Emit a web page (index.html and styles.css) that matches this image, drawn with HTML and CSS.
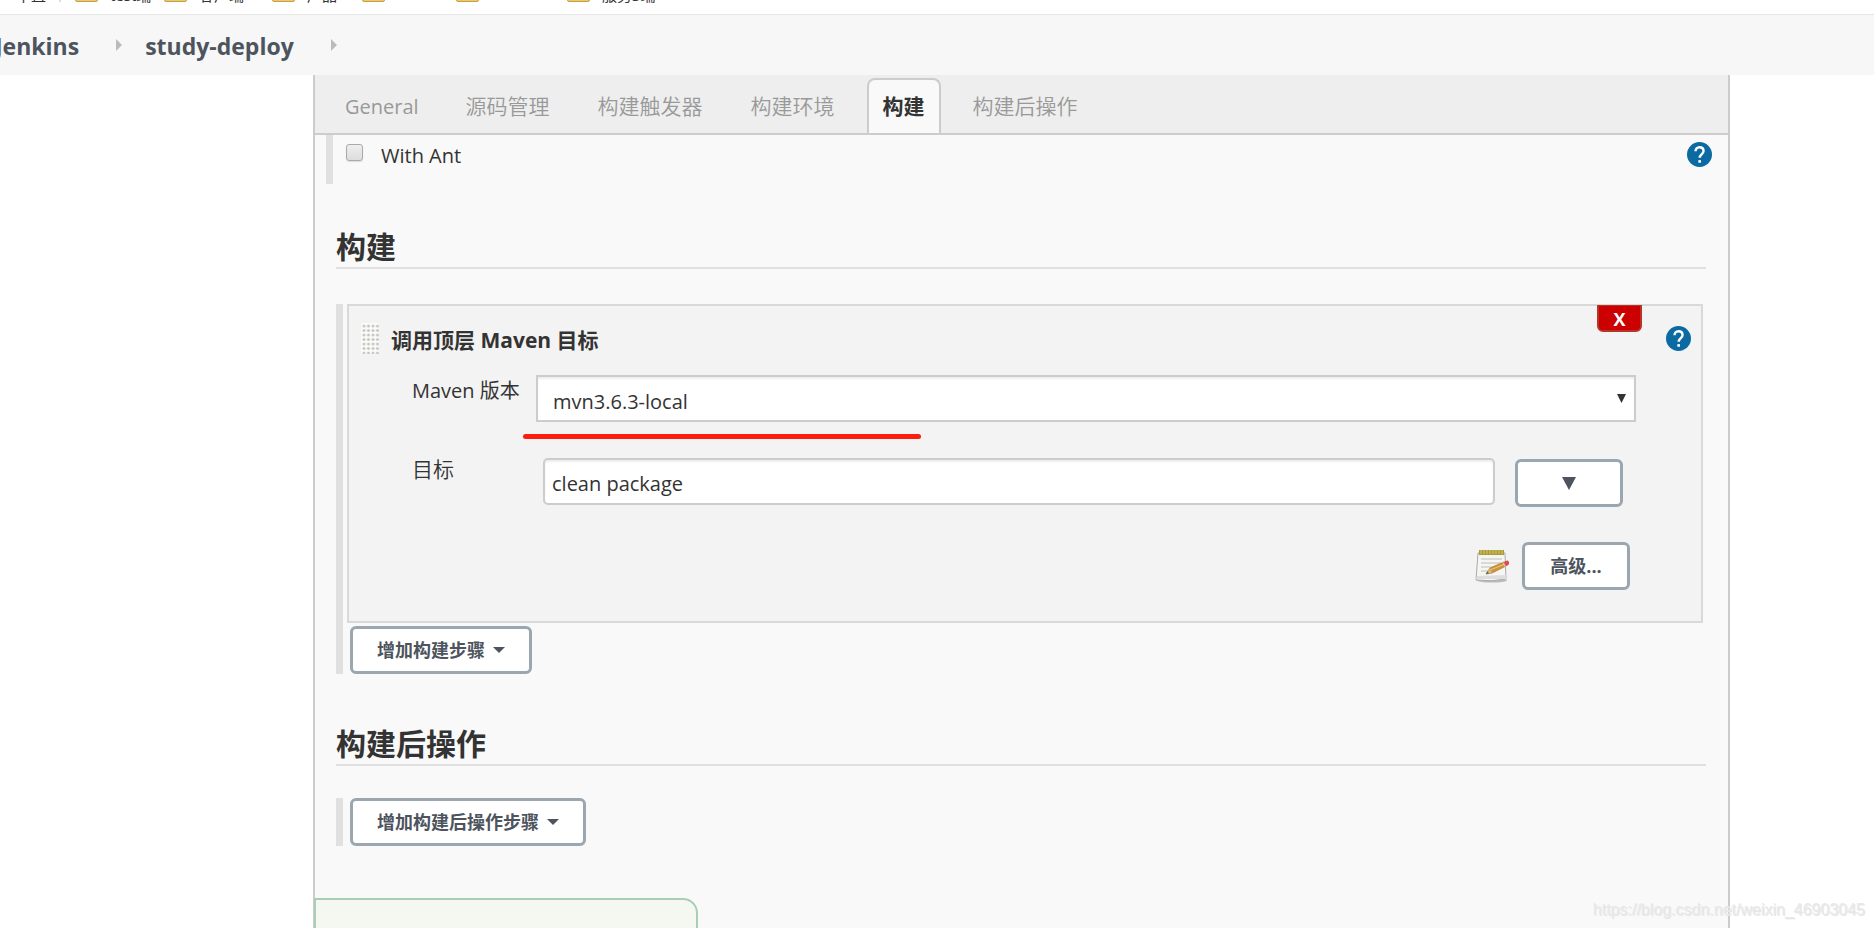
FILE: index.html
```html
<!DOCTYPE html>
<html lang="zh-CN">
<head>
<meta charset="utf-8">
<title>study-deploy Config [Jenkins]</title>
<link rel="stylesheet" href="styles.css">
</head>
<body>
<svg class="defs" aria-hidden="true">
  <symbol id="help" viewBox="0 0 24 24">
    <circle cx="12" cy="12" r="12" fill="#0b6aa2"/>
    <path d="M8.2 8.9C8.2 6.7 9.7 5 12 5s3.900 1.500 3.900 3.600c0 2.900-3.700 3.200-3.700 6.600" fill="none" stroke="#fff" stroke-width="2.300"/>
    <rect x="10.900" y="17.400" width="2.500" height="2.500" fill="#fff"/>
  </symbol>
</svg>

<div class="bookmarks">
  <span class="mark-label first">中直</span>
  <span class="mark-divider"></span>
  <span class="mark w-89"><i class="folder"></i><span class="mark-label">test端</span></span>
  <span class="mark w-108"><i class="folder"></i><span class="mark-label">客户端</span></span>
  <span class="mark w-90"><i class="folder"></i><span class="mark-label">产品</span></span>
  <span class="mark w-94"><i class="folder"></i></span>
  <span class="mark w-111"><i class="folder"></i></span>
  <span class="mark w-111"><i class="folder"></i><span class="mark-label">服务3端</span></span>
</div>

<nav class="breadcrumbs">
  <a href="#">Jenkins</a>
  <svg class="crumb-arrow" viewBox="0 0 6 12"><path d="M0 0L6 6L0 12Z" fill="#bbb"/></svg>
  <a href="#">study-deploy</a>
  <svg class="crumb-arrow" viewBox="0 0 6 12"><path d="M0 0L6 6L0 12Z" fill="#bbb"/></svg>
</nav>

<main class="panel">
  <nav class="tabs">
    <a class="tab latin" href="#">General</a>
    <a class="tab" href="#">源码管理</a>
    <a class="tab" href="#">构建触发器</a>
    <a class="tab" href="#">构建环境</a>
    <a class="tab active" href="#build">构建</a>
    <a class="tab" href="#post">构建后操作</a>
  </nav>

  <div class="option">
    <input type="checkbox" id="ant">
    <label for="ant">With Ant</label>
    <svg class="help"><use href="#help"/></svg>
  </div>

  <section class="section" id="build">
    <h2>构建</h2>
    <div class="steps">
      <div class="builder">
        <button class="delete" type="button">X</button>
        <div class="builder-head">
          <svg class="grip" viewBox="0 0 18 31">
            <defs>
              <pattern id="dots" width="4.500" height="4.500" patternUnits="userSpaceOnUse">
                <rect width="4.500" height="4.500" fill="#fbfbfa"/>
                <circle cx="3" cy="3" r="1.500" fill="#c4c4c0"/>
              </pattern>
            </defs>
            <rect width="18" height="31" fill="url(#dots)"/>
          </svg>
          <h3>调用顶层 Maven 目标</h3>
          <svg class="help"><use href="#help"/></svg>
        </div>
        <div class="row version">
          <label for="maven">Maven 版本</label>
          <span class="select-wrap">
            <select id="maven"><option>mvn3.6.3-local</option></select>
            <svg class="select-arrow" viewBox="0 0 9 9"><path d="M0 0H9L4.500 9Z" fill="#333"/></svg>
          </span>
          <span class="underline"></span>
        </div>
        <div class="row goals">
          <label for="goals">目标</label>
          <input type="text" id="goals" value="clean package">
          <button class="btn small" type="button" aria-label="展开"><svg class="down" viewBox="0 0 14 13"><path d="M0 0H14L7 13Z" fill="#4d545d"/></svg></button>
        </div>
        <div class="row advanced">
          <svg class="notepad" viewBox="0 0 34 34">
            <ellipse cx="17" cy="31.500" rx="15" ry="2" fill="#bbb"/>
            <path d="M3 4H30L31 30Q17 33 1 31Z" fill="#f5f5f3" stroke="#aaa"/>
            <path d="M2 27L31 26L31 30H1Z" fill="#dededc"/>
            <path d="M4 1H29V6H4Z" fill="#a99a3a"/>
            <path d="M6 1v4M9 1v4M12 1v4M15 1v4M18 1v4M21 1v4M24 1v4M27 1v4" stroke="#d8c865"/>
            <path d="M6 10H27M6 14H26M6 18H16M6 22H13" stroke="#cfcfcd" stroke-width="1.300"/>
            <path d="M11 25L15 19L29 13L31 17L17 24Z" fill="#cf9438" stroke="#a87a35" stroke-width=".8"/>
            <path d="M15 21L30 15" stroke="#eac076" stroke-width="1.200"/>
            <path d="M11 25L15 19L17 24Z" fill="#d8b880"/>
            <path d="M11 25L12.500 22.500L14 24.500Z" fill="#555"/>
            <path d="M28 13.500L30 17.500L31.500 17" stroke="#ccc" fill="none"/>
            <path d="M29 13Q33 10 34 13Q35 16 31 17Z" fill="#e04a4a"/>
          </svg>
          <button class="btn small" type="button">高级...</button>
        </div>
      </div>
      <button class="btn" type="button">增加构建步骤<i class="caret"></i></button>
    </div>
  </section>

  <section class="section post" id="post">
    <h2>构建后操作</h2>
    <div class="steps">
      <button class="btn" type="button">增加构建后操作步骤<i class="caret"></i></button>
    </div>
  </section>

  <div class="savebar"></div>
</main>
<div class="watermark">https://blog.csdn.net/weixin_46903045</div>
</body>
</html>
```

FILE: styles.css
```css
* { box-sizing: border-box; }

body {
  margin: 0;
  min-height: 100vh;
  display: flex;
  flex-direction: column;
  overflow: hidden;
  background: #fff;
  color: #333;
  font: 20px/28px "Open Sans", "Noto Sans CJK SC", sans-serif;
}

a { color: inherit; text-decoration: none; }
input, select, button { font: inherit; color: inherit; margin: 0; }
.defs { position: absolute; width: 0; height: 0; }

.bookmarks {
  display: flex;
  flex: none;
  height: 15px;
  padding-bottom: 12px;
  align-items: flex-end;
  border-bottom: 1px solid #e6e6e6;
  overflow: hidden;
}
.mark { display: flex; flex: none; align-items: flex-end; gap: 12px; }
.mark-label { font-size: 15px; line-height: 13px; white-space: nowrap; }
.first { width: 43px; margin-left: 16px; }
.mark-divider { width: 2px; height: 16px; margin-right: 14px; background: #ddd; }
.folder { width: 23px; height: 16px; background: #e9c874; border: 1px solid #c9a040; border-radius: 2px; }
.w-89 { width: 89px; }
.w-90 { width: 90px; }
.w-94 { width: 94px; }
.w-108 { width: 108px; }
.w-111 { width: 111px; }

.breadcrumbs {
  display: flex;
  flex: none;
  align-items: center;
  height: 60px;
  background: #f7f7f7;
  color: #4d545d;
  font-size: 23px;
  font-weight: 700;
}
.breadcrumbs a { padding-top: 2px; }
.breadcrumbs a:first-child { margin-left: -5px; }
.crumb-arrow { width: 6px; height: 12px; margin: 0 23px 0 37px; }

.panel {
  display: flex;
  flex: 1;
  flex-direction: column;
  margin: 0 144px 0 313px;
  border: solid #ccc;
  border-width: 0 2px;
  background: #f9f9f9;
}

.tabs {
  display: flex;
  height: 60px;
  padding: 3px 15px 0;
  gap: 16px;
  background: #eee;
  border-bottom: 2px solid #ccc;
  color: #999;
}
.tab {
  padding: 12px 14px 0;
  border: 2px solid transparent;
  border-bottom: 0;
  border-radius: 8px 8px 0 0;
  font-size: 21px;
  font-weight: 350;
  white-space: nowrap;
}
.tab.latin { padding: 13px 13px 0; font-size: 20px; font-weight: 400; }
.tab.active { background: #f9f9f9; border-color: #ccc; color: #333; font-weight: 700; }

.help { width: 25px; height: 25px; margin-left: auto; }

.option {
  display: flex;
  align-items: flex-start;
  height: 49px;
  margin: 0 16px 0 11px;
  padding: 7px 0 0 13px;
  border-left: 7px solid #e0e0e0;
}
.option input {
  appearance: none;
  width: 17px;
  height: 17px;
  margin: 2px 18px 0 0;
  border: 1px solid #aaa;
  border-radius: 3px;
  background: linear-gradient(#eee, #ddd);
  box-shadow: 0 1px 1px #ddd;
}

.section { margin: 42px 22px 0 21px; }
.section.post { margin-top: 49px; }
h2 {
  margin: 0;
  border-bottom: 2px solid #e0e0e0;
  font-size: 30px;
  line-height: 41px;
  font-weight: 700;
}
.steps {
  margin: 35px 3px 0 0;
  padding-left: 4px;
  border-left: 7px solid #e0e0e0;
}
.post .steps { margin-top: 32px; }
.steps > .btn { display: block; margin-left: 3px; }

.builder {
  position: relative;
  margin-bottom: 3px;
  padding: 17px 0 31px;
  border: 2px solid #d9d9d9;
  background: #f3f3f3;
}
.delete {
  position: absolute;
  top: -1px;
  right: 59px;
  width: 45px;
  height: 27px;
  padding: 0;
  border: 2px solid #b5352a;
  border-top-width: 1px;
  border-radius: 0 0 6px 6px;
  background: #c00;
  color: #fff;
  font-size: 18px;
  line-height: 26px;
  font-weight: 700;
}
.builder-head { display: flex; align-items: center; padding: 0 10px 0 12px; }
.grip { width: 18px; height: 31px; margin-right: 12px; }
h3 { margin: 0; padding-top: 2px; font-size: 21px; line-height: 28px; font-weight: 700; }

.row { display: flex; padding-left: 63px; }
.row label { flex: none; }
.version { position: relative; margin-top: 21px; padding-right: 65px; }
.version label { width: 124px; padding-top: 2px; font-weight: 400; }
.select-wrap { position: relative; flex: 1; }
select {
  appearance: none;
  display: block;
  width: 100%;
  height: 47px;
  padding: 6px 15px 0;
  border: 2px solid #ccc;
  border-radius: 0;
  background: #fff;
  box-shadow: inset 0 2px 2px #eee;
}
.select-arrow { position: absolute; right: 10px; top: 19px; width: 9px; height: 9px; }
.underline {
  position: absolute;
  left: 174px;
  top: 59px;
  width: 398px;
  height: 5px;
  border-radius: 3px;
  background: #ff1d10;
}
.goals { margin-top: 36px; padding-right: 78px; align-items: flex-start; }
.goals label { width: 131px; font-size: 21px; line-height: 22px; font-weight: 350; }
.goals input {
  flex: 1;
  min-width: 0;
  height: 47px;
  margin-right: 20px;
  padding: 4px 7px 0;
  border: 2px solid #ccc;
  border-radius: 5px;
  background: #fff;
  box-shadow: inset 0 2px 2px #eee;
}
.goals .btn { margin-top: 1px; }
.advanced { align-items: center; justify-content: flex-end; gap: 13px; margin-top: 35px; padding-right: 71px; }
.notepad { width: 34px; height: 34px; }

.btn {
  height: 48px;
  padding: 0 24px;
  border: 3px solid #9aa7b0;
  border-radius: 6px;
  background: #fff;
  color: #4d545d;
  font-size: 18px;
  line-height: 42px;
  font-weight: 700;
  white-space: nowrap;
}
.small { width: 108px; padding: 0; }
.down { width: 14px; height: 13px; }
.caret {
  display: inline-block;
  margin-left: 8px;
  vertical-align: 4px;
  border: solid transparent;
  border-width: 6px 6px 0;
  border-top-color: #4d545d;
}

.savebar {
  width: 384px;
  height: 30px;
  margin: auto 0 0 -1px;
  border: 2px solid #a9cdb9;
  border-bottom: 0;
  border-radius: 0 15px 0 0;
  background: #f5f8f1;
}

.watermark {
  position: absolute;
  right: 9px;
  bottom: 6px;
  color: #e9e9e9;
  font: 16px/24px "Liberation Sans", sans-serif;
  text-shadow: 1px 1px 0 #e6e6e6;
}
```
